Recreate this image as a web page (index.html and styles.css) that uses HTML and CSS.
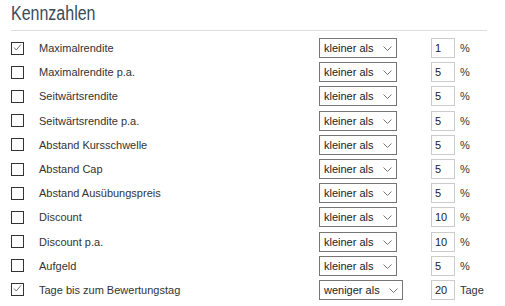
FILE: index.html
```html
<!DOCTYPE html>
<html lang="de">
<head>
    <meta charset="UTF-8">
    <title>Kennzahlen</title>
    <link rel="stylesheet" href="styles.css">
</head>
<body>
    <div class="panel">
        <h2 class="title"><span>Kennzahlen</span></h2>

        <div class="rows">
            <!-- one row per Kennzahl: checkbox, label, operator, value, unit -->
            <span class="box checked"><svg viewBox="0 0 13 13"><path d="M2.5 6.5 L5 9.5 L10.5 3"/></svg></span>
            <span class="label">Maximalrendite</span>
            <span class="select"><select><option>kleiner als</option></select><svg viewBox="0 0 9 5"><path d="M0.5 0.5 L4.5 4.5 L8.5 0.5"/></svg></span>
            <input class="value" type="text" value="1">
            <span class="unit">%</span>

            <span class="box"></span>
            <span class="label">Maximalrendite p.a.</span>
            <span class="select"><select><option>kleiner als</option></select><svg viewBox="0 0 9 5"><path d="M0.5 0.5 L4.5 4.5 L8.5 0.5"/></svg></span>
            <input class="value" type="text" value="5">
            <span class="unit">%</span>

            <span class="box"></span>
            <span class="label">Seitwärtsrendite</span>
            <span class="select"><select><option>kleiner als</option></select><svg viewBox="0 0 9 5"><path d="M0.5 0.5 L4.5 4.5 L8.5 0.5"/></svg></span>
            <input class="value" type="text" value="5">
            <span class="unit">%</span>

            <span class="box"></span>
            <span class="label">Seitwärtsrendite p.a.</span>
            <span class="select"><select><option>kleiner als</option></select><svg viewBox="0 0 9 5"><path d="M0.5 0.5 L4.5 4.5 L8.5 0.5"/></svg></span>
            <input class="value" type="text" value="5">
            <span class="unit">%</span>

            <span class="box"></span>
            <span class="label">Abstand Kursschwelle</span>
            <span class="select"><select><option>kleiner als</option></select><svg viewBox="0 0 9 5"><path d="M0.5 0.5 L4.5 4.5 L8.5 0.5"/></svg></span>
            <input class="value" type="text" value="5">
            <span class="unit">%</span>

            <span class="box"></span>
            <span class="label">Abstand Cap</span>
            <span class="select"><select><option>kleiner als</option></select><svg viewBox="0 0 9 5"><path d="M0.5 0.5 L4.5 4.5 L8.5 0.5"/></svg></span>
            <input class="value" type="text" value="5">
            <span class="unit">%</span>

            <span class="box"></span>
            <span class="label">Abstand Ausübungspreis</span>
            <span class="select"><select><option>kleiner als</option></select><svg viewBox="0 0 9 5"><path d="M0.5 0.5 L4.5 4.5 L8.5 0.5"/></svg></span>
            <input class="value" type="text" value="5">
            <span class="unit">%</span>

            <span class="box"></span>
            <span class="label">Discount</span>
            <span class="select"><select><option>kleiner als</option></select><svg viewBox="0 0 9 5"><path d="M0.5 0.5 L4.5 4.5 L8.5 0.5"/></svg></span>
            <input class="value" type="text" value="10">
            <span class="unit">%</span>

            <span class="box"></span>
            <span class="label">Discount p.a.</span>
            <span class="select"><select><option>kleiner als</option></select><svg viewBox="0 0 9 5"><path d="M0.5 0.5 L4.5 4.5 L8.5 0.5"/></svg></span>
            <input class="value" type="text" value="10">
            <span class="unit">%</span>

            <span class="box"></span>
            <span class="label">Aufgeld</span>
            <span class="select"><select><option>kleiner als</option></select><svg viewBox="0 0 9 5"><path d="M0.5 0.5 L4.5 4.5 L8.5 0.5"/></svg></span>
            <input class="value" type="text" value="5">
            <span class="unit">%</span>

            <span class="box checked"><svg viewBox="0 0 13 13"><path d="M2.5 6.5 L5 9.5 L10.5 3"/></svg></span>
            <span class="label">Tage bis zum Bewertungstag</span>
            <span class="select"><select><option>weniger als</option></select><svg viewBox="0 0 9 5"><path d="M0.5 0.5 L4.5 4.5 L8.5 0.5"/></svg></span>
            <input class="value" type="text" value="20">
            <span class="unit">Tage</span>
        </div>
    </div>
</body>
</html>
```

FILE: styles.css
```css
/* General styling */
body {
    margin: 0;
    background: #fff;
    font-family: "Liberation Sans", Arial, sans-serif;
    color: #333;
}

.panel {
    width: 476px;
    padding-left: 11px;
}

/* Heading with rule below */
.title {
    margin: 0;
    height: 30px;
    font-size: 20px;
    font-weight: normal;
    line-height: 27px;
    color: #3b4a58;
    border-bottom: 1px solid #ddd;
}

/* condensed heading face */
.title span {
    display: inline-block;
    transform: scaleX(0.8);
    transform-origin: left center;
}

/* Rows grid */
.rows {
    display: grid;
    grid-template-columns: 28px 280px 112px 29px auto;
    grid-auto-rows: 24.2px;
    align-items: center;
    padding-top: 5px;
    font-size: 11px;
}

.box {
    width: 11px;
    height: 11px;
    border: 1px solid #333;
}

.box svg {
    display: block;
    width: 11px;
    height: 11px;
    margin: -1px 0 0 0;
    fill: none;
    stroke: #555;
    stroke-width: 1;
}

.label {
    color: #333;
}

/* Operator dropdown */
.select {
    position: relative;
    justify-self: start;
}

.select select {
    appearance: none;
    -webkit-appearance: none;
    display: block;
    height: 20px;
    margin: 0;
    padding: 0 22px 0 4px;
    border: 1px solid #767676;
    border-radius: 0;
    background: #fff;
    font-family: inherit;
    font-size: 11px;
    color: #222;
}

.select svg {
    position: absolute;
    right: 5px;
    top: 8px;
    width: 9px;
    height: 5px;
    fill: none;
    stroke: #777;
    stroke-width: 1;
}

/* Value input */
.value {
    box-sizing: border-box;
    width: 24px;
    height: 20px;
    margin: 0;
    padding: 0 3px;
    border: 1px solid #ccc;
    font-family: inherit;
    font-size: 11px;
    color: #222;
}

.unit {
    color: #333;
}
```
